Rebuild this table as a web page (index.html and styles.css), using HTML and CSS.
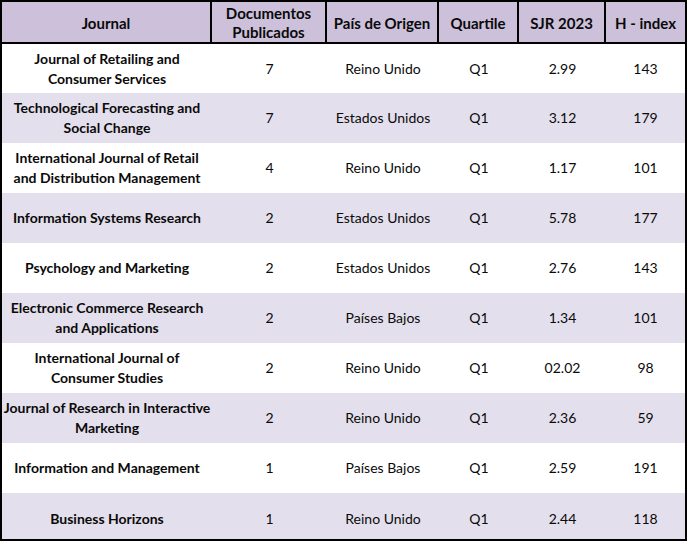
FILE: index.html
```html
<!DOCTYPE html>
<html lang="es">
<head>
<meta charset="utf-8">
<title>Journals</title>
<link rel="stylesheet" href="styles.css">
</head>
<body>
<div class="frame">
<table class="journals">
  <colgroup>
    <col class="c1"><col class="c2"><col class="c3"><col class="c4"><col class="c5"><col class="c6">
  </colgroup>
  <thead>
    <tr>
      <th>Journal</th>
      <th>Documentos<br>Publicados</th>
      <th>País de Origen</th>
      <th>Quartile</th>
      <th>SJR 2023</th>
      <th>H - index</th>
    </tr>
  </thead>
  <tbody>
    <tr><td class="name">Journal of Retailing and<br>Consumer Services</td><td>7</td><td>Reino Unido</td><td>Q1</td><td>2.99</td><td>143</td></tr>
    <tr><td class="name">Technological Forecasting and<br>Social Change</td><td>7</td><td>Estados Unidos</td><td>Q1</td><td>3.12</td><td>179</td></tr>
    <tr><td class="name">International Journal of Retail<br>and Distribution Management</td><td>4</td><td>Reino Unido</td><td>Q1</td><td>1.17</td><td>101</td></tr>
    <tr><td class="name">Information Systems Research</td><td>2</td><td>Estados Unidos</td><td>Q1</td><td>5.78</td><td>177</td></tr>
    <tr><td class="name">Psychology and Marketing</td><td>2</td><td>Estados Unidos</td><td>Q1</td><td>2.76</td><td>143</td></tr>
    <tr><td class="name">Electronic Commerce Research<br>and Applications</td><td>2</td><td>Países Bajos</td><td>Q1</td><td>1.34</td><td>101</td></tr>
    <tr><td class="name">International Journal of<br>Consumer Studies</td><td>2</td><td>Reino Unido</td><td>Q1</td><td>02.02</td><td>98</td></tr>
    <tr><td class="name">Journal of Research in Interactive<br>Marketing</td><td>2</td><td>Reino Unido</td><td>Q1</td><td>2.36</td><td>59</td></tr>
    <tr><td class="name">Information and Management</td><td>1</td><td>Países Bajos</td><td>Q1</td><td>2.59</td><td>191</td></tr>
    <tr><td class="name">Business Horizons</td><td>1</td><td>Reino Unido</td><td>Q1</td><td>2.44</td><td>118</td></tr>
  </tbody>
</table>
</div>
</body>
</html>
```

FILE: styles.css
```css
html, body {
  margin: 0;
  padding: 0;
  background: #ffffff;
}

.frame {
  width: 683px;
  border: 2px solid #000;
  background: #fff;
}

.journals {
  width: 683px;
  table-layout: fixed;
  border-collapse: separate;
  border-spacing: 0;
  font-family: Lato, "Open Sans", sans-serif;
  font-size: 14px;
  line-height: 20px;
  color: #0a0a0a;
}

.c1 { width: 210px; }
.c2 { width: 115px; }
.c3 { width: 112px; }
.c4 { width: 80px; }
.c5 { width: 87px; }
.c6 { width: 79px; }

.journals th {
  background: #ccc0da;
  height: 38px;
  padding: 2px 0 0;
  border-right: 2px solid #000;
  border-bottom: 2px solid #000;
  font-size: 15px;
  line-height: 19px;
  font-weight: 700;
  text-align: center;
  vertical-align: middle;
}

.journals th:last-child {
  border-right: none;
}

.journals td {
  padding: 0;
  height: 50px;
  text-align: center;
  vertical-align: middle;
}

.journals tbody tr:first-child td { height: 49px; }
.journals tbody tr:last-child td {
  height: 40px;
  padding-top: 6px;
}

.journals tbody tr:nth-child(even) td {
  background: #e4dfec;
}

.journals td.name {
  font-weight: 700;
  white-space: nowrap;
}
```
